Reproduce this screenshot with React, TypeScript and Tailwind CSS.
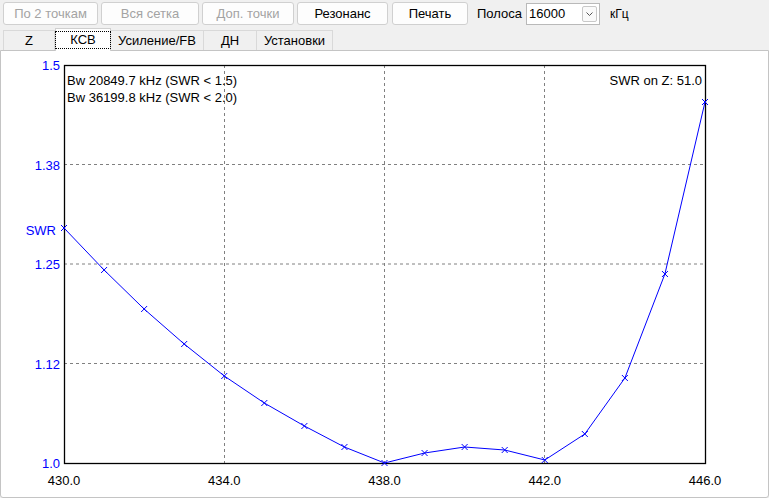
import React from 'react';

const PTS: [number, number][] = [
  [430, 228], [431, 270], [432, 309], [433, 344], [434, 376], [435, 403], [436, 426], [437, 447],
  [438, 463], [439, 453], [440, 447], [441, 450], [442, 460], [443, 434], [444, 378], [445, 274], [446, 102],
];

const L = 64, T = 65, R = 705, B = 463;
const fx = (f: number) => L + ((f - 430) / 16) * (R - L);

const BUTTONS = [
  { label: 'По 2 точкам', w: 'w-[95px]', off: true },
  { label: 'Вся сетка', w: 'w-[98px]', off: true },
  { label: 'Доп. точки', w: 'w-[92px]', off: true },
  { label: 'Резонанс', w: 'w-[91px]', off: false },
  { label: 'Печать', w: 'w-[76px]', off: false },
];

const TABS = [
  { label: 'Z', w: 'w-[52px]' },
  { label: 'КСВ', w: 'w-[56px]', active: true },
  { label: 'Усиление/FB', w: 'w-[94px]' },
  { label: 'ДН', w: 'w-[54px]' },
  { label: 'Установки', w: 'w-[77px]' },
];

function SwrChart() {
  const yGrid = [164.5, 264, 363.5];
  const xGrid = [224, 384, 544];
  const yLabels: [string, number][] = [['1.5', T], ['1.38', 164.5], ['1.25', 264], ['1.12', 363.5], ['1.0', B]];
  const xLabels = [430, 434, 438, 442, 446];
  const line = PTS.map(([f, y]) => `${fx(f).toFixed(1)},${y}`).join(' ');

  return (
    <svg width={767} height={446} viewBox="1 51 767 446" className="block" style={{ fontFamily: '"Liberation Sans", Arial, sans-serif' }}>
      {yGrid.map((y) => (
        <line key={y} x1={L} x2={R} y1={y} y2={y} stroke="#808080" strokeDasharray="3 3" />
      ))}
      {xGrid.map((x) => (
        <line key={x} x1={x + 0.5} x2={x + 0.5} y1={T} y2={B} stroke="#808080" strokeDasharray="3 3" />
      ))}
      <rect x={L + 0.5} y={T + 0.5} width={R - L} height={B - T} fill="none" stroke="#000" strokeWidth={1.3} />

      <polyline points={line} fill="none" stroke="#0000ff" strokeWidth={1} />
      {PTS.map(([f, y]) => {
        const x = fx(f);
        return (
          <path key={f} d={`M${x - 3} ${y - 3}L${x + 3} ${y + 3}M${x - 3} ${y + 3}L${x + 3} ${y - 3}`} stroke="#0000ff" strokeWidth={1} />
        );
      })}

      {yLabels.map(([t, y]) => (
        <text key={t} x={60} y={y + 5} textAnchor="end" fontSize={13} fill="#0000ff">{t}</text>
      ))}
      <text x={56} y={235} textAnchor="end" fontSize={13} fill="#0000ff">SWR</text>
      {xLabels.map((f) => (
        <text key={f} x={fx(f)} y={485} textAnchor="middle" fontSize={13} fill="#000">{f.toFixed(1)}</text>
      ))}

      <text x={67} y={85} fontSize={13} fill="#000">Bw 20849.7 kHz (SWR &lt; 1.5)</text>
      <text x={67} y={102} fontSize={13} fill="#000">Bw 36199.8 kHz (SWR &lt; 2.0)</text>
      <text x={702} y={85} textAnchor="end" fontSize={13} fill="#000">SWR on Z: 51.0</text>
    </svg>
  );
}

export default function App() {
  return (
    <div className="w-[769px] h-[498px] bg-[#f0f0f0] overflow-hidden font-['Liberation_Sans',Arial,sans-serif] text-[13px] text-black">
      <div className="flex items-center h-[28px] pl-[3px] pt-[2px] pb-[3px]">
        {BUTTONS.map((b, i) => (
          <div
            key={b.label}
            className={`${b.w} h-[23px] flex items-center justify-center bg-[#fdfdfd] border border-[#d0d0d0] rounded-[3px] ${i > 0 ? (i === 4 ? 'ml-[4px]' : 'ml-[3px]') : ''} ${b.off ? 'text-[#a3a3a3]' : 'text-black'}`}
          >
            {b.label}
          </div>
        ))}
        <span className="ml-[9px]">Полоса</span>
        <div className="ml-[4px] w-[74px] h-[22px] bg-white border border-[#b9b9b9] flex items-center justify-between pl-[2px] pr-[2px]">
          <span className="leading-none">16000</span>
          <div className="w-[15px] h-[16px] border border-[#c8c8c8] rounded-[2px] flex items-center justify-center bg-[#fafafa]">
            <svg width="7" height="4" viewBox="0 0 7 4">
              <path d="M0.5 0.5L3.5 3.5L6.5 0.5" fill="none" stroke="#555" strokeWidth="1" />
            </svg>
          </div>
        </div>
        <span className="ml-[10px] text-[12px]">кГц</span>
      </div>

      <div className="flex items-end h-[22px] pl-[3px]">
        {TABS.map((t) =>
          t.active ? (
            <div key={t.label} className={`${t.w} h-[23px] -mb-px z-10 bg-white border border-b-0 border-[#d0d0d0] flex items-center justify-center`}>
              <span className="px-[14px] border border-dotted border-black leading-[16px]">{t.label}</span>
            </div>
          ) : (
            <div key={t.label} className={`${t.w} h-[20px] bg-[#f0f0f0] border border-b-0 border-[#d9d9d9] -ml-px first:ml-0 flex items-center justify-center`}>
              {t.label}
            </div>
          )
        )}
      </div>

      <div className="w-[769px] h-[448px] bg-white border border-[#c4c4c4] rounded-b-[3px]">
        <SwrChart />
      </div>
    </div>
  );
}
